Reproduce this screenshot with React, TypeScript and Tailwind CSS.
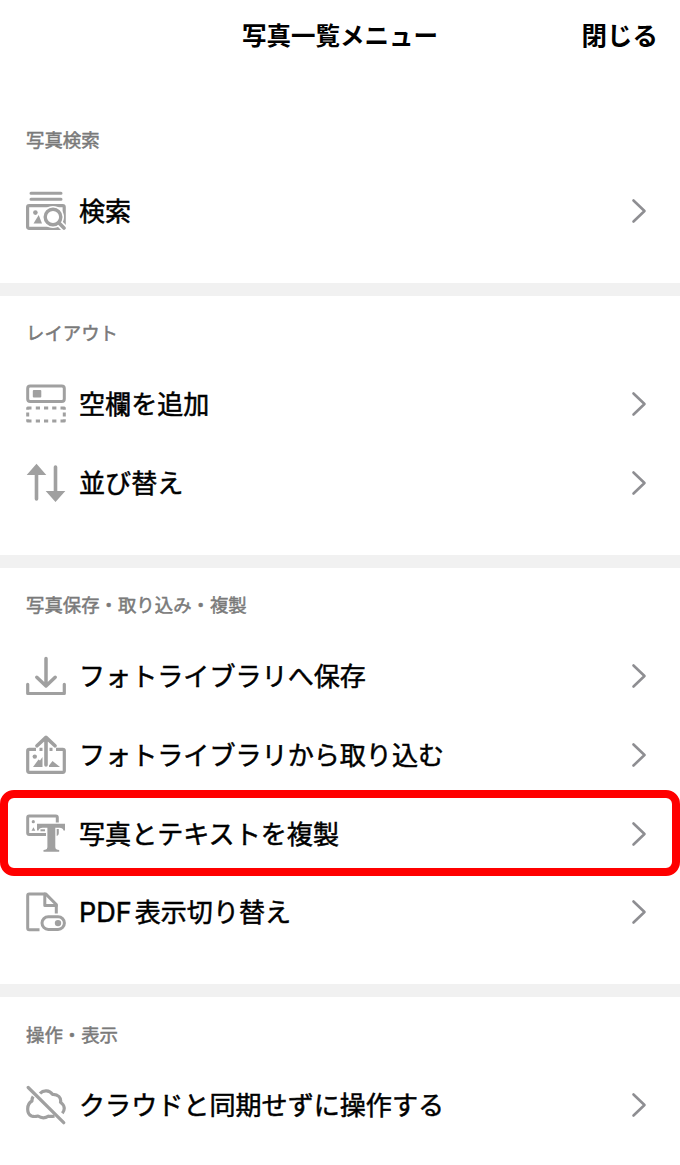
import React, { ReactNode } from "react";

type Item = {
  label: string;
  icon: ReactNode;
  highlighted?: boolean;
};

type Section = {
  title: string;
  items: Item[];
};

const Icon = ({ children }: { children: ReactNode }) => (
  <svg
    viewBox="0 0 40 40"
    className="h-10 w-10 shrink-0 text-[#a0a0a0]"
    fill="none"
    stroke="currentColor"
    strokeWidth="3.6"
    strokeLinecap="round"
    strokeLinejoin="round"
  >
    {children}
  </svg>
);

const SearchIcon = () => (
  <Icon>
    <path d="M5 2.2h30M5 8.2h30" strokeWidth="3" />
    <rect x="1.6" y="14.6" width="36.6" height="22.8" rx="1.5" strokeWidth="3.2" />
    <circle cx="9.4" cy="21.6" r="2.3" fill="currentColor" stroke="none" />
    <path d="M7.5 32.5l5.2-8.5 3.3 8.5z" fill="currentColor" stroke="none" />
    <circle cx="27" cy="26" r="11" fill="white" stroke="none" />
    <path d="M33 32l4.5 4.5" stroke="white" strokeWidth="7" />
    <circle cx="27" cy="26" r="7.8" strokeWidth="3.4" />
    <path d="M32.8 31.8l5.2 5.2" strokeWidth="3.6" />
  </Icon>
);

const AddBlankIcon = () => (
  <Icon>
    <rect x="1.7" y="1.9" width="36.6" height="15.6" rx="2.5" strokeWidth="3" />
    <rect x="6.8" y="6" width="8.5" height="7.5" rx="1" fill="currentColor" stroke="none" />
    <g strokeWidth="3" strokeLinecap="butt">
      <path d="M9.8 24H14M18 24h4.2M26.2 24h4.2M9.8 37H14M18 37h4.2M26.2 37h4.2M1.7 28.5v4M38.3 28.5v4" />
      <path d="M1.7 25.8V24h3.8M34.5 24h3.8v1.8M1.7 35.2V37h3.8M34.5 37h3.8v-1.8" />
    </g>
  </Icon>
);

const SortIcon = () => (
  <Icon>
    <path d="M10.5 10v26M29.5 4v25" />
    <path d="M10.5 .8L20.3 12H.7zM29.5 39L39.3 28H19.7z" fill="currentColor" stroke="none" />
  </Icon>
);

const SaveIcon = () => (
  <Icon>
    <path d="M20 2.5v27M10.8 21.3L20 30l9.2-8.7" strokeWidth="3.5" />
    <path d="M1.7 28.3v9.2h36.6v-9.2" strokeWidth="3.2" />
  </Icon>
);

const ImportIcon = () => (
  <Icon>
    <path
      d="M10 14.3H3.2q-1.5 0-1.5 1.5v20q0 1.5 1.5 1.5h33.6q1.5 0 1.5-1.5v-20q0-1.5-1.5-1.5H30M13.5 14.3h3M23.5 14.3h3"
      strokeWidth="3.2"
      strokeLinecap="butt"
    />
    <circle cx="8.8" cy="21.6" r="2.2" fill="currentColor" stroke="none" />
    <path
      d="M7 32l5.5-7.5 1.5 1 2.5-3.5V32zM23 32v-1.5l3.5-4.5 2.5 2 5 4z"
      fill="currentColor"
      stroke="none"
    />
    <path d="M20 30V3M11 10.8l9-8.4 9 8.4" />
  </Icon>
);

const DuplicateIcon = () => (
  <Icon>
    <rect x="1.7" y="1.9" width="29.6" height="18.7" rx="1.5" strokeWidth="3" />
    <circle cx="7.3" cy="7.7" r="1.6" fill="currentColor" stroke="none" />
    <path d="M5.5 16.8l2-3.6 1.8 3.6z" fill="currentColor" stroke="none" />
    <path
      d="M11 9.8h28v6.7h-1.5q-.6-2.8-4-2.8h-4.2v19.5q0 2.2 2.3 2.5l1.6.3v1.8H17.5V36l1.600-.3q2.3-.3 2.3-2.5V13.7h-4.9q-3.4 0-4 2.8H11z"
      fill="currentColor"
      stroke="white"
      strokeWidth="2.8"
      strokeLinejoin="miter"
      paintOrder="stroke"
    />
    <path d="M14.5 15.300h4.5v2h-4.5z" fill="currentColor" stroke="none" />
  </Icon>
);

const PdfIcon = () => (
  <Icon>
    <path
      d="M13.5 37.7H3.2q-1.5 0-1.5-1.5V3.4q0-1.5 1.5-1.5h16.5l10.6 10.6v9"
      strokeWidth="3"
      strokeLinecap="butt"
    />
    <path d="M18.8 2v11.5h11.5" strokeWidth="3" />
    <rect x="16" y="24.8" width="22.4" height="12.6" rx="6.3" strokeWidth="3" />
    <circle cx="32" cy="31.1" r="3.2" fill="currentColor" stroke="none" />
  </Icon>
);

const CloudOffIcon = () => (
  <Icon>
    <g strokeWidth="3.2" strokeLinecap="butt">
      <path d="M7.2 11.5Q5.8 13.5 6 16C.5 19 .2 28.5 5.5 31q3 1 6.500 0 5 3.500 10.500.2 3 .6 6-.2" />
      <path d="M14 8.5c3.5-3.800 9.500-3.300 12.500.8 5.500-.3 9 3.500 8 8 4.500 3.200 4.700 7.500 1.800 11" />
    </g>
    <path d="M2.2 2.5l35.5 35.2" strokeWidth="3.2" />
  </Icon>
);

const sections: Section[] = [
  {
    title: "写真検索",
    items: [{ label: "検索", icon: <SearchIcon /> }],
  },
  {
    title: "レイアウト",
    items: [
      { label: "空欄を追加", icon: <AddBlankIcon /> },
      { label: "並び替え", icon: <SortIcon /> },
    ],
  },
  {
    title: "写真保存・取り込み・複製",
    items: [
      { label: "フォトライブラリへ保存", icon: <SaveIcon /> },
      { label: "フォトライブラリから取り込む", icon: <ImportIcon /> },
      { label: "写真とテキストを複製", icon: <DuplicateIcon />, highlighted: true },
      { label: "PDF表示切り替え", icon: <PdfIcon /> },
    ],
  },
  {
    title: "操作・表示",
    items: [{ label: "クラウドと同期せずに操作する", icon: <CloudOffIcon /> }],
  },
];

// Latin letters are set a little larger than the kana and kanji next to them
const renderLabel = (label: string) =>
  label.startsWith("PDF") ? (
    <>
      <span className="mr-[3px] text-[27px]">PDF</span>
      {label.slice(3)}
    </>
  ) : (
    label
  );

const MenuRow = ({ label, icon, highlighted }: Item) => (
  <button className="relative flex h-[78.8px] w-full items-center pr-[33px] pl-[26px] text-left">
    {icon}
    <span className="ml-[13px] grow pt-0.5 text-[26.08px] leading-10 [-webkit-text-stroke:0.5px_black]">
      {renderLabel(label)}
    </span>
    <svg
      viewBox="0 0 16 26"
      className="h-[26px] w-4 shrink-0 text-[#8e8e92]"
      fill="none"
      stroke="currentColor"
      strokeWidth="2.6"
      strokeLinecap="round"
      strokeLinejoin="round"
    >
      <path d="M2.5 2.5L13.5 13l-11 10.5" />
    </svg>
    {highlighted && (
      <span className="absolute inset-x-0 -top-1 -bottom-[3px] rounded-[14px] border-8 border-[#ff0000]" />
    )}
  </button>
);

const App = () => {
  return (
    <div className="h-[1165px] w-[680px] overflow-hidden bg-white font-['Inter','Noto_Sans_CJK_JP',sans-serif] text-black">
      <header className="grid h-[103px] grid-cols-[1fr_auto_1fr] items-start px-[22px] pt-4 text-[24.5px] leading-10 font-bold">
        <h1 className="col-start-2">写真一覧メニュー</h1>
        <button className="justify-self-end text-[25.5px]">閉じる</button>
      </header>
      {sections.map((section, index) => (
        <section key={section.title}>
          {index > 0 && <div className="h-[13px] bg-[#f1f1f1]" />}
          <div className="pb-[32.4px]">
            <h2 className="h-[68.8px] pt-[25.4px] pl-[26px] text-[18.4px] leading-6 text-[#7a7a7a] [-webkit-text-stroke:0.5px_#7a7a7a]">
              {section.title}
            </h2>
            {section.items.map((item) => (
              <MenuRow key={item.label} {...item} />
            ))}
          </div>
        </section>
      ))}
    </div>
  );
};

export default App;
